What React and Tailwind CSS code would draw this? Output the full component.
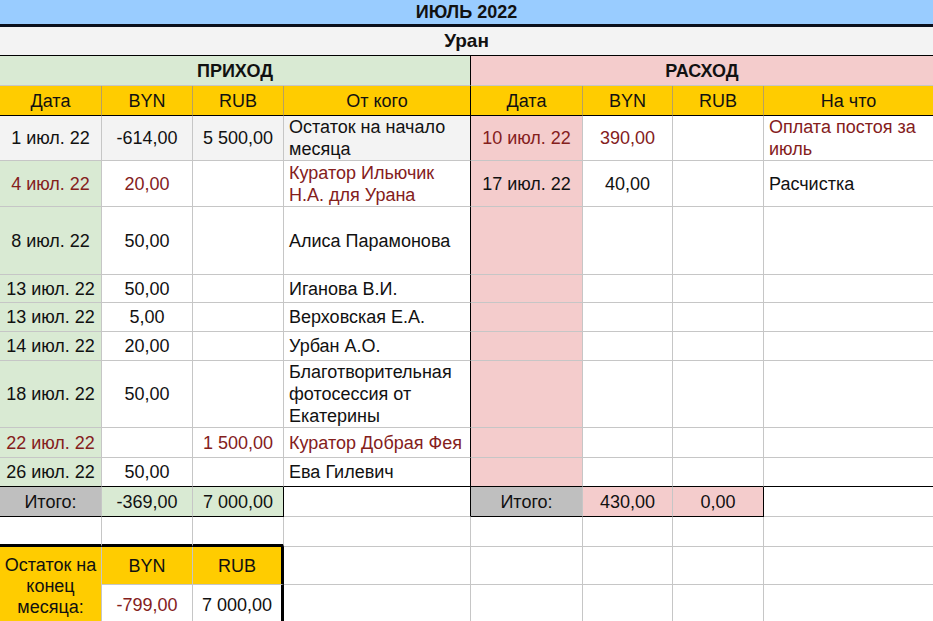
import React from 'react';
import { twMerge } from 'tailwind-merge';

const RED = 'text-[#84201c]';

function Cell({ className = '', children, left }) {
  return (
    <div
      className={twMerge(
        'flex items-center border-r border-b border-[#c6c6c6] text-[18px] leading-[22px] overflow-hidden',
        left ? 'justify-start pl-[5px] text-left' : 'justify-center text-center',
        className
      )}
    >
      {children}
    </div>
  );
}

const incoming = [
  { date: '1 июл. 22', byn: '-614,00', rub: '5 500,00', from: <>Остаток на начало<br />месяца</>, row: 'bg-[#f3f3f3]', dateBg: 'bg-[#f3f3f3]' },
  { date: '4 июл. 22', byn: '20,00', rub: '', from: <>Куратор Ильючик<br />Н.А. для Урана</>, red: true },
  { date: '8 июл. 22', byn: '50,00', rub: '', from: 'Алиса Парамонова' },
  { date: '13 июл. 22', byn: '50,00', rub: '', from: 'Иганова В.И.' },
  { date: '13 июл. 22', byn: '5,00', rub: '', from: 'Верховская Е.А.' },
  { date: '14 июл. 22', byn: '20,00', rub: '', from: 'Урбан А.О.' },
  { date: '18 июл. 22', byn: '50,00', rub: '', from: <>Благотворительная<br />фотосессия от<br />Екатерины</> },
  { date: '22 июл. 22', byn: '', rub: '1 500,00', from: 'Куратор Добрая Фея', red: true },
  { date: '26 июл. 22', byn: '50,00', rub: '', from: 'Ева Гилевич' },
];

const outgoing = [
  { date: '10 июл. 22', byn: '390,00', rub: '', what: <>Оплата постоя за<br />июль</>, red: true },
  { date: '17 июл. 22', byn: '40,00', rub: '', what: 'Расчистка' },
];

export default function App() {
  return (
    <div className="w-[933px] h-[621px] overflow-hidden bg-white text-[#111] font-['Liberation_Sans',Arial,sans-serif]">
      <div className="h-[27px] bg-[#99ccff] border-b-[3px] border-[#0a0f1c] flex items-center justify-center text-[18px] font-bold">
        ИЮЛЬ 2022
      </div>
      <div className="h-[29px] bg-[#f3f3f3] border-b border-black flex items-center justify-center text-[19px] font-bold">
        Уран
      </div>

      <div className="grid grid-cols-[102px_91px_91px_187px_112px_90px_91px_169px] grid-rows-[30px_30px_45px_46px_68px_28px_29px_29px_67px_30px_29px_30px_30px_38px_40px]">
        <Cell className="col-span-4 bg-[#d9ead3] font-bold border-r-black">ПРИХОД</Cell>
        <Cell className="col-span-4 bg-[#f4cccc] font-bold border-r-0">РАСХОД</Cell>

        {['Дата', 'BYN', 'RUB', 'От кого', 'Дата', 'BYN', 'RUB', 'На что'].map((h, i) => (
          <Cell
            key={i}
            className={twMerge('bg-[#ffcc00] border-b-black border-r-[#b8a060]', i === 3 && 'border-r-black', i === 7 && 'border-r-0')}
          >
            {h}
          </Cell>
        ))}

        {incoming.map((r, i) => {
          const o = outgoing[i];
          const last = i === incoming.length - 1;
          const bb = last ? 'border-b-black' : '';
          const c = r.red ? RED : '';
          const oc = o && o.red ? RED : '';
          return (
            <React.Fragment key={i}>
              <Cell className={twMerge(r.dateBg || 'bg-[#d9ead3]', c, bb)}>{r.date}</Cell>
              <Cell className={twMerge(r.row, c, bb)}>{r.byn}</Cell>
              <Cell className={twMerge(r.row, c, bb)}>{r.rub}</Cell>
              <Cell left className={twMerge(r.row, c, 'border-r-black', bb)}>{r.from}</Cell>
              <Cell className={twMerge('bg-[#f4cccc]', oc, bb)}>{o ? o.date : ''}</Cell>
              <Cell className={twMerge(oc, bb)}>{o ? o.byn : ''}</Cell>
              <Cell className={twMerge(oc, bb)}>{o ? o.rub : ''}</Cell>
              <Cell left className={twMerge(oc, 'border-r-0', bb)}>{o ? o.what : ''}</Cell>
            </React.Fragment>
          );
        })}

        <Cell className="bg-[#bfbfbf] border-b-black">Итого:</Cell>
        <Cell className="bg-[#d9ead3] border-b-black">-369,00</Cell>
        <Cell className="bg-[#d9ead3] border-b-black border-r-black">7 000,00</Cell>
        <Cell className="border-r-black" />
        <Cell className="bg-[#bfbfbf] border-b-black">Итого:</Cell>
        <Cell className="bg-[#f4cccc] border-b-black">430,00</Cell>
        <Cell className="bg-[#f4cccc] border-b-black border-r-black">0,00</Cell>
        <Cell className="border-r-0" />

        <Cell className="border-b-[3px] border-b-black" />
        <Cell className="border-b-[3px] border-b-black" />
        <Cell className="border-b-[3px] border-b-black" />
        <Cell />
        <Cell />
        <Cell />
        <Cell />
        <Cell className="border-r-0" />

        <Cell className="row-span-2 bg-[#ffcc00] leading-[21px] border-b-0">
          Остаток на<br />конец<br />месяца:
        </Cell>
        <Cell className="bg-[#ffcc00]">BYN</Cell>
        <Cell className="bg-[#ffcc00] border-r-[3px] border-r-black">RUB</Cell>
        <Cell />
        <Cell />
        <Cell />
        <Cell />
        <Cell className="border-r-0" />

        <Cell className={RED}>-799,00</Cell>
        <Cell className="border-r-[3px] border-r-black">7 000,00</Cell>
        <Cell />
        <Cell />
        <Cell />
        <Cell />
        <Cell className="border-r-0" />
      </div>
    </div>
  );
}
